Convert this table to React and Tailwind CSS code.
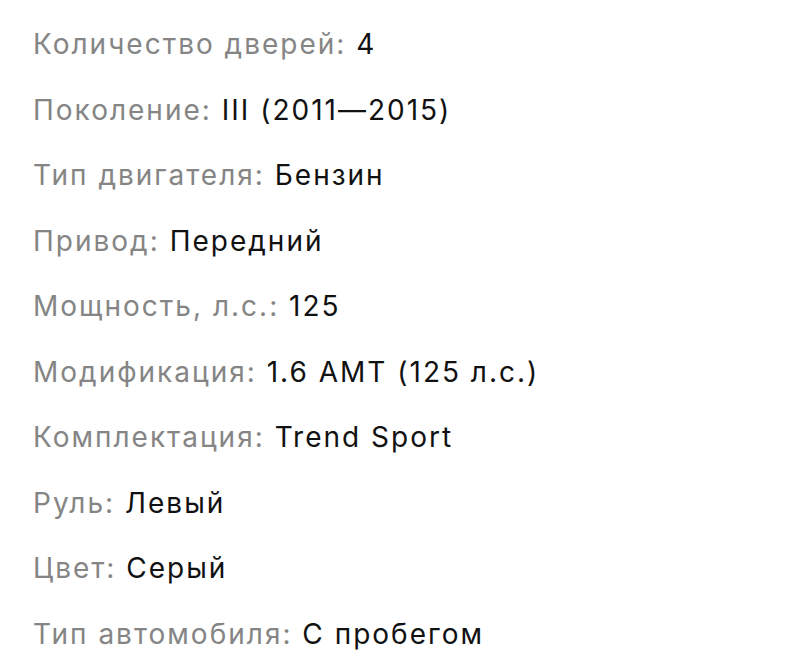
export default function App() {
  const rows = [
    ["Количество дверей:", "4"],
    ["Поколение:", "III (2011—2015)"],
    ["Тип двигателя:", "Бензин"],
    ["Привод:", "Передний"],
    ["Мощность, л.с.:", "125"],
    ["Модификация:", "1.6 AMT (125 л.с.)"],
    ["Комплектация:", "Trend Sport"],
    ["Руль:", "Левый"],
    ["Цвет:", "Серый"],
    ["Тип автомобиля:", "С пробегом"],
  ];
  return (
    <div className="w-[800px] h-[667px] bg-white overflow-hidden pl-[33px] pt-[12px] font-['Inter',sans-serif] text-[28px] tracking-[2px]">
      <div className="flex flex-col">
        {rows.map(([k, v]) => (
          <div key={k} className="h-[65.5px] leading-[65.5px] whitespace-nowrap">
            <span className="text-[#858585]">{k} </span>
            <span className="text-[#111111]">{v}</span>
          </div>
        ))}
      </div>
    </div>
  );
}
